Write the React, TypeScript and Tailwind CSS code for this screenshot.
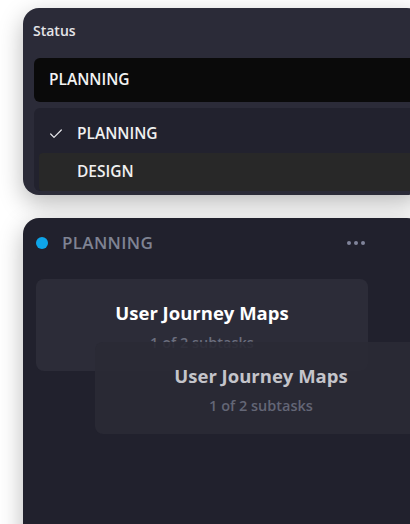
import { Check } from 'lucide-react';

const font = { fontFamily: '"Open Sans", "Noto Sans", sans-serif' };

function StatusSelect() {
    return (
        <div className="ml-[23px] mt-2 h-[187px] w-[400px] shrink-0 overflow-hidden rounded-2xl bg-[#2b2b38] pl-[11px] pt-[14px] shadow-[0_8px_24px_rgba(0,0,0,0.28)]">
            <div className="-ml-px text-[14px] font-semibold leading-[18px] text-[#e4e4e7]">Status</div>

            <div className="mt-[18px] flex h-[44px] items-center rounded-md bg-[#0a0a0a] pl-[15px] text-[15.5px] font-semibold text-[#f2f2f2]">
                PLANNING
            </div>

            {/* Open listbox */}
            <div className="mt-[6px] rounded-md bg-[#22222e] px-[5px] pt-[7px]">
                <div className="flex h-[38px] items-center gap-[13px] pl-[9px] text-[15.5px] font-semibold text-[#f0f0f0]">
                    <Check className="h-[16px] w-[16px] text-[#e8e8ec]" strokeWidth={1.8} />
                    <span>PLANNING</span>
                </div>
                <div className="flex h-[38px] items-center rounded-sm bg-[#282828] pl-[38px] text-[15.5px] font-semibold text-[#f0f0f0]">
                    DESIGN
                </div>
            </div>
        </div>
    );
}

function TaskCard({ dragging = false }: { dragging?: boolean }) {
    return (
        <div
            className={`flex h-[92px] w-[332px] flex-col items-center rounded-lg pt-[22px] ${dragging ? 'bg-[#2a2a35] opacity-90' : 'bg-[#2c2c38]'
                }`}
        >
            <div className={`text-[18.5px] font-bold leading-6 ${dragging ? 'text-[#d6d6dc]' : 'text-white'}`}>
                User Journey Maps
            </div>
            <div className="mt-2 text-[14.5px] font-semibold leading-5 text-[#6b6e7e]">1 of 2 subtasks</div>
        </div>
    );
}

function Column() {
    return (
        <div className="ml-[23px] mt-[23px] h-[400px] w-[400px] shrink-0 rounded-2xl bg-[#21212d] pl-[13px] pt-[13px] shadow-[0_8px_24px_rgba(0,0,0,0.28)]">
            <div className="flex h-6 w-[332px] items-center justify-between">
                <div className="flex items-center gap-[14px]">
                    <div className="h-3 w-3 rounded-full bg-[#0ea5e9]" />
                    <span className="text-[17px] font-semibold tracking-[0.02em] text-[#7f8393]">PLANNING</span>
                </div>
                <div className="mr-[3px] flex items-center gap-[3px]">
                    <div className="h-[4px] w-[4px] rounded-full bg-[#80849a]" />
                    <div className="h-[4px] w-[4px] rounded-full bg-[#80849a]" />
                    <div className="h-[4px] w-[4px] rounded-full bg-[#80849a]" />
                </div>
            </div>

            <div className="relative mt-6">
                <TaskCard />
                {/* drag overlay */}
                <div className="absolute left-[59px] top-[63px]">
                    <TaskCard dragging />
                </div>
            </div>
        </div>
    );
}

export default function App() {
    return (
        <div className="flex h-[524px] w-[410px] flex-col overflow-hidden bg-white" style={font}>
            <StatusSelect />
            <Column />
        </div>
    );
}
